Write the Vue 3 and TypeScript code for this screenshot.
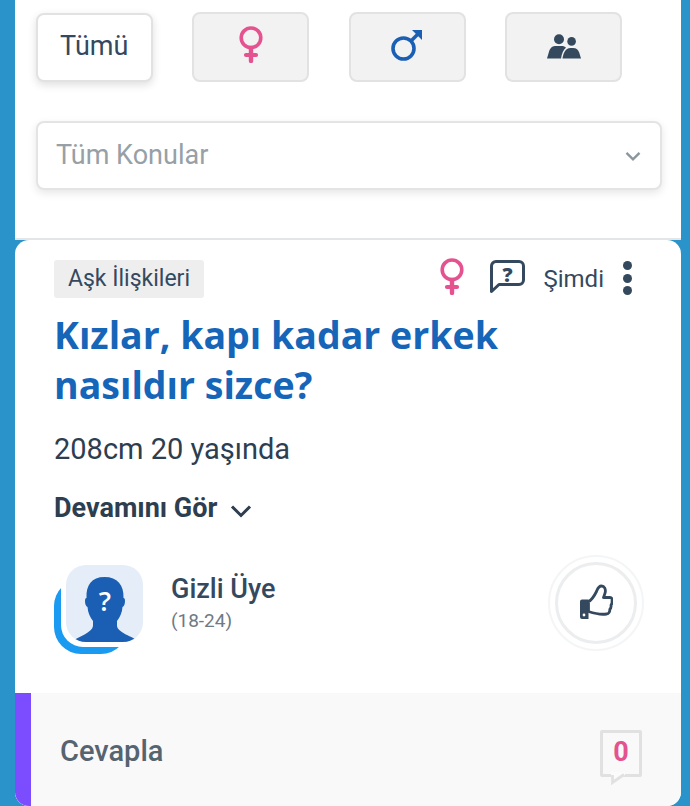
<script setup lang="ts">
</script>

<template>
  <div class="page">
    <section class="filters">
      <div class="tabs">
        <button class="tab active"><span class="tab-text">Tümü</span></button>
        <button class="tab">
          <svg class="ic-f" viewBox="0 0 24 37" fill="none" stroke="#e4528f">
            <circle cx="12" cy="11.800" r="9.800" stroke-width="3.600" />
            <path d="M12 22v13" stroke-width="4.400" stroke-linecap="round" />
            <path d="M7 29h10" stroke-width="4.200" stroke-linecap="round" />
          </svg>
        </button>
        <button class="tab">
          <svg class="ic-m" viewBox="0 0 32 32" fill="none">
            <circle cx="12.500" cy="19.500" r="10.500" stroke="#1a5fb4" stroke-width="3.600" />
            <path d="M20 12 28 4" stroke="#1a5fb4" stroke-width="3.600" />
            <path d="M21 1h10v10z" fill="#1a5fb4" />
          </svg>
        </button>
        <button class="tab">
          <svg class="ic-g" viewBox="0 0 34 25" fill="#34495e">
            <circle cx="12" cy="5.200" r="5" />
            <circle cx="24.600" cy="7.400" r="4.300" />
            <path d="M0 24.500 2.200 17C3.500 13.300 6 12 9 12h5.500c2 0 3.500.6 4.500 1.700-2.600 2-4.200 6-5 10.800Z" />
            <path d="M15.500 24.500c.8-5 2.600-10.500 8-10.500h2.500c3.500 0 5.300 2 6.200 4.500L34 24.500Z" />
          </svg>
        </button>
      </div>
      <div class="select">
        <span class="select-text">Tüm Konular</span>
        <svg class="chev-s" viewBox="0 0 16 11" fill="none" stroke="#8b979f" stroke-width="2.400">
          <path d="M1.500 1.800 8 8.300l6.500-6.500" />
        </svg>
      </div>
    </section>

    <article class="card">
      <div class="meta">
        <span class="tag">Aşk İlişkileri</span>
        <div class="meta-right">
          <svg class="meta-f" viewBox="0 0 24 37" fill="none" stroke="#e4528f">
            <circle cx="12" cy="11.800" r="9.800" stroke-width="3.600" />
            <path d="M12 22v13" stroke-width="4.400" stroke-linecap="round" />
            <path d="M7 29h10" stroke-width="4.200" stroke-linecap="round" />
          </svg>
          <svg class="meta-q" viewBox="0 0 35 34" fill="none">
            <path d="M1.500 31.500V6a4.500 4.500 0 0 1 4.500-4.500h23A4.500 4.500 0 0 1 33.500 6v14a4.500 4.500 0 0 1-4.500 4.500H9Z" stroke="#34495e" stroke-width="3" stroke-linejoin="round" />
            <text x="17.500" y="21.500" text-anchor="middle" class="q-mark">?</text>
          </svg>
          <span class="time">Şimdi</span>
          <span class="dots"><i></i><i></i><i></i></span>
        </div>
      </div>
      <h1 class="title">Kızlar, kapı kadar erkek nasıldır sizce?</h1>
      <p class="body">208cm 20 yaşında</p>
      <div class="more">
        <span>Devamını Gör</span>
        <svg class="chev-m" viewBox="0 0 22 14" fill="none" stroke="#2c3e50" stroke-width="3">
          <path d="M2 2.500 11 11.500l9-9" />
        </svg>
      </div>
      <div class="author">
        <div class="avatar">
          <div class="avatar-back"></div>
          <div class="avatar-front">
            <svg viewBox="0 0 77 77" class="avatar-svg">
              <path fill="#1a5fb4" d="M5 77C13 71 26 68 27 61v-5c-3-4-5-8-5.500-14-1.500-.5-2.500-3-2.500-6 0-2 .5-3 1.500-3-.5-13 5-21 18-21s19.500 8 19 21c1 0 1.500 1 1.500 3 0 3-1 5.500-2.500 6-.5 6-2.500 10-5.500 14v5c1 7 15 10 23 16Z" />
              <text x="39" y="46" text-anchor="middle" class="avatar-q">?</text>
            </svg>
          </div>
        </div>
        <div class="who">
          <div class="name">Gizli Üye</div>
          <div class="age">(18-24)</div>
        </div>
        <div class="like-outer">
          <div class="like-inner">
            <svg class="thumb" viewBox="0 0 34 38">
              <path fill="#34495e" d="M1 17.500a2 2 0 0 1 2-2h6.500V35H3a2 2 0 0 1-2-2Z" />
              <circle cx="5" cy="31" r="1.400" fill="#fff" />
              <path fill="none" stroke="#34495e" stroke-width="2.800" stroke-linejoin="round" d="M9.500 17.500c3.500-1.500 6-6 8-10 1-2.500 2-5.500 5-5.500 3 0 4.200 3 3.800 6-.3 2-1.300 4-1.800 5.500H31c2 0 2.500 2 2 3.500.3 1.500-.2 3-1 4 .3 1.800-.2 3.300-1.200 4.200.2 2-.8 4.800-3.300 4.800-6.500 1-12-.5-18-2.500Z" />
            </svg>
          </div>
        </div>
      </div>
      <footer class="reply">
        <span class="reply-label">Cevapla</span>
        <div class="count">
          <span class="count-box">0</span>
          <svg class="count-tail" viewBox="0 0 15 14">
            <path d="M0 0v13L14 3V0Z" fill="#fbfbfb" />
            <path d="M1.500 3v7.500L13 2.500" fill="none" stroke="#e1e1e1" stroke-width="2.800" />
          </svg>
        </div>
      </footer>
    </article>
  </div>
</template>

<style>
html, body { margin: 0; padding: 0; }
</style>

<style scoped>
.page {
  box-sizing: border-box;
  width: 690px;
  height: 806px;
  overflow: hidden;
  background: #2a93c9;
  padding: 0 9px 0 15px;
  font-family: Roboto, "Noto Sans", sans-serif;
}
.filters {
  box-sizing: border-box;
  height: 240px;
  background: #fff;
  border-bottom: 2px solid #e3e5e6;
  padding: 12px 20px 0 21px;
}
.tabs {
  display: flex;
  gap: 39.500px;
}
.tab {
  box-sizing: border-box;
  width: 117px;
  height: 70px;
  border: 2px solid #e2e2e2;
  border-radius: 8px;
  background: #f2f2f3;
  padding: 0;
  display: flex;
  align-items: center;
  justify-content: center;
  font-family: inherit;
  font-size: 27px;
  color: #34495e;
}
.tab.active {
  background: #fff;
  width: 116.500px;
  height: 69px;
  margin-top: 1px;
  box-shadow: 0 3px 8px rgba(0, 0, 0, 0.13);
}
.tab-text { margin-top: -4px; }
.ic-f { width: 24px; height: 37px; margin-top: -5px; }
.ic-m { width: 32px; height: 32px; margin-top: -4px; }
.ic-g { width: 34px; height: 25px; margin-top: -2px; margin-left: 1px; }
.select {
  box-sizing: border-box;
  margin-top: 39px;
  height: 69px;
  width: 626px;
  border: 2px solid #e4e4e4;
  border-radius: 8px;
  background: #fff;
  box-shadow: 0 3px 8px rgba(0, 0, 0, 0.1);
  display: flex;
  align-items: center;
  justify-content: space-between;
  padding: 0 19px 0 18px;
  font-size: 27px;
  color: #96a0a6;
}
.select-text { margin-top: -2px; }
.chev-s { width: 16px; height: 11px; margin-top: 2px; }
.card {
  box-sizing: border-box;
  height: 566px;
  background: #fff;
  border-radius: 14px;
  padding: 20px 0 0;
  overflow: hidden;
  display: flex;
  flex-direction: column;
}
.meta {
  display: flex;
  justify-content: space-between;
  padding: 0 49px 0 39px;
  height: 38px;
}
.tag {
  box-sizing: border-box;
  height: 38px;
  padding: 0 14px;
  background: #eeeeee;
  border-radius: 3px;
  font-size: 23px;
  line-height: 38px;
  color: #34495e;
}
.meta-right {
  display: flex;
  align-items: flex-start;
}
.meta-f { width: 24px; height: 37px; margin-top: -2px; }
.meta-q { width: 35px; height: 34px; margin-left: 26px; }
.q-mark {
  font-family: "Open Sans", sans-serif;
  font-weight: 800;
  font-size: 20px;
  fill: #34495e;
}
.time {
  font-size: 24px;
  line-height: 38px;
  color: #34495e;
  margin-left: 18px;
}
.dots {
  display: flex;
  flex-direction: column;
  gap: 3.500px;
  margin-left: 19px;
  margin-top: 1px;
}
.dots i {
  display: block;
  width: 9px;
  height: 9px;
  border-radius: 50%;
  background: #34495e;
}
.title {
  margin: 12px 0 0;
  padding: 0 140px 0 39px;
  font-family: "Open Sans", sans-serif;
  font-weight: 700;
  font-size: 37.500px;
  line-height: 50px;
  color: #1565b8;
}
.body {
  margin: 21px 0 0 39px;
  font-size: 29px;
  line-height: 36px;
  color: #2c3e50;
}
.more {
  margin: 25px 0 0 39px;
  display: flex;
  align-items: center;
  font-size: 27px;
  font-weight: 700;
  line-height: 32px;
  color: #2c3e50;
}
.chev-m { width: 22px; height: 14px; margin-left: 13px; margin-top: 6px; }
.author {
  display: flex;
  align-items: center;
  margin-top: 41px;
  padding: 0 37px 0 39px;
}
.avatar {
  position: relative;
  width: 89px;
  height: 90px;
  flex: none;
}
.avatar-back {
  position: absolute;
  left: 0;
  top: 14px;
  width: 74px;
  height: 75px;
  background: #1a9af0;
  border-radius: 27px;
}
.avatar-front {
  position: absolute;
  left: 7px;
  top: -2px;
  width: 82px;
  height: 84px;
  background: #fff;
  border-radius: 22px;
}
.avatar-svg {
  position: absolute;
  left: 5px;
  top: 2px;
  width: 77px;
  height: 77px;
  background: #e4edf8;
  border-radius: 20px;
}
.avatar-q {
  font-family: "Open Sans", sans-serif;
  font-weight: 600;
  font-size: 27px;
  fill: #fff;
}
.who {
  margin-left: 28px;
  margin-top: -10px;
}
.name {
  font-size: 27px;
  font-weight: 500;
  line-height: 32px;
  color: #34495e;
}
.age {
  font-size: 19px;
  line-height: 32px;
  color: #6e7a84;
}
.like-outer {
  margin-left: auto;
  box-sizing: border-box;
  width: 96px;
  height: 96px;
  border: 2px solid #f4f5f6;
  border-radius: 50%;
  display: flex;
  align-items: center;
  justify-content: center;
  margin-top: -15px;
}
.like-inner {
  box-sizing: border-box;
  width: 82px;
  height: 82px;
  border: 3px solid #ebedef;
  border-radius: 50%;
  display: flex;
  align-items: center;
  justify-content: center;
}
.thumb { width: 34px; height: 38px; }
.reply {
  margin-top: auto;
  flex: none;
  box-sizing: border-box;
  height: 113px;
  background: #f9f9fa;
  border-left: 16px solid #7c4dff;
  padding: 0 39px 0 29px;
  display: flex;
  align-items: flex-start;
  justify-content: space-between;
}
.reply-label {
  margin-top: 41px;
  font-size: 29px;
  line-height: 34px;
  font-weight: 500;
  color: #56646f;
}
.count {
  position: relative;
  margin-top: 37px;
  width: 42px;
}
.count-box {
  box-sizing: border-box;
  display: block;
  width: 42px;
  height: 47px;
  border: 3px solid #e1e1e1;
  border-radius: 2px;
  text-align: center;
  font-size: 27px;
  line-height: 38px;
  font-weight: 700;
  color: #e4528f;
}
.count-tail {
  position: absolute;
  left: 11px;
  top: 42px;
  width: 15px;
  height: 14px;
}
</style>
